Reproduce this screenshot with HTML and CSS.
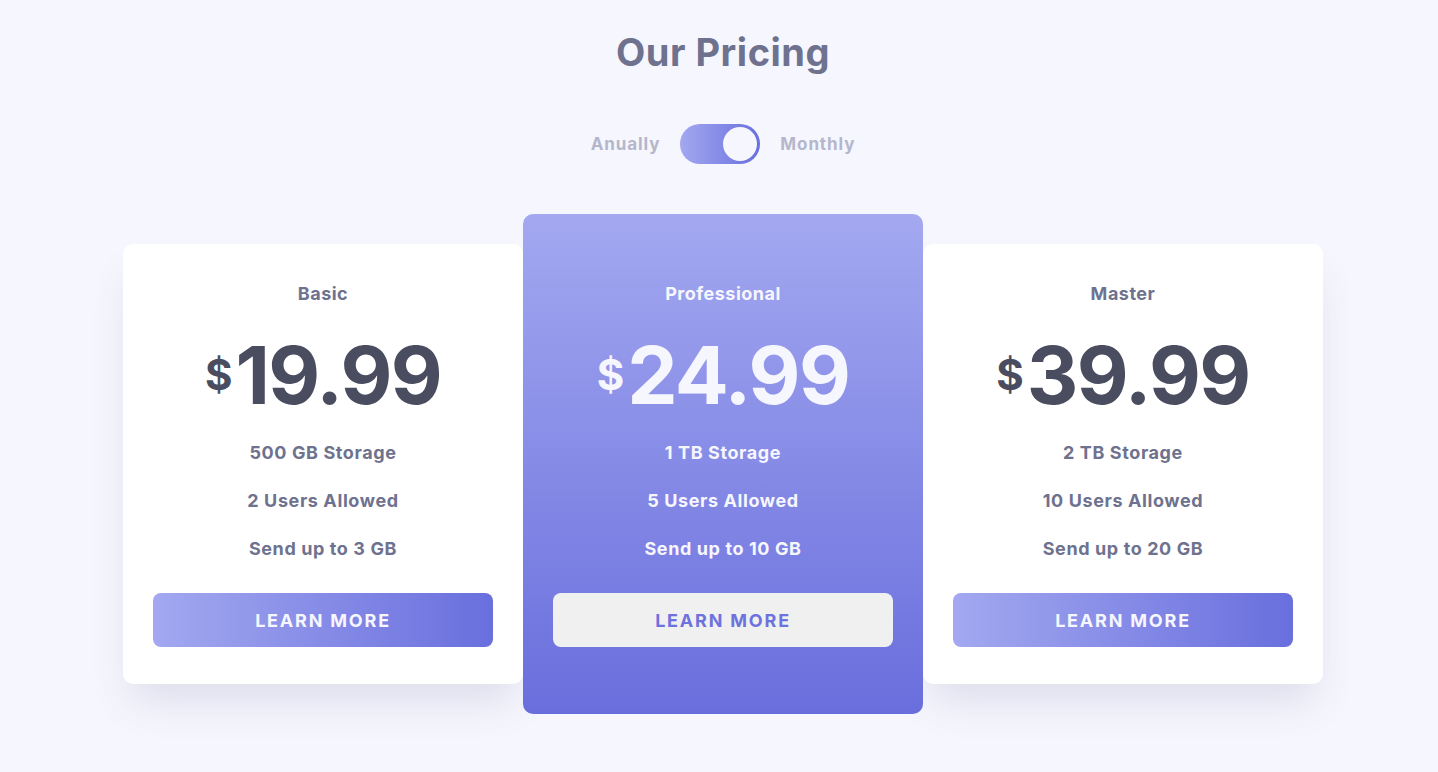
FILE: index.html
```html
<!DOCTYPE html>
<html lang="en">
<head>
<meta charset="utf-8">
<title>Our Pricing</title>
<link rel="stylesheet" href="styles.css">
</head>
<body>
<main class="page">
  <h1 class="title">Our Pricing</h1>
  <div class="switch-row">
    <span class="switch-label">Anually</span>
    <div class="switch"><span class="knob"></span></div>
    <span class="switch-label">Monthly</span>
  </div>
  <section class="cards">
    <article class="card">
      <h2 class="plan">Basic</h2>
      <div class="price"><span class="cur">$</span>19.99</div>
      <ul class="features">
        <li>500 GB Storage</li>
        <li>2 Users Allowed</li>
        <li>Send up to 3 GB</li>
      </ul>
      <button class="btn">LEARN MORE</button>
    </article>
    <article class="card featured">
      <h2 class="plan">Professional</h2>
      <div class="price"><span class="cur">$</span>24.99</div>
      <ul class="features">
        <li>1 TB Storage</li>
        <li>5 Users Allowed</li>
        <li>Send up to 10 GB</li>
      </ul>
      <button class="btn">LEARN MORE</button>
    </article>
    <article class="card">
      <h2 class="plan">Master</h2>
      <div class="price"><span class="cur">$</span>39.99</div>
      <ul class="features">
        <li>2 TB Storage</li>
        <li>10 Users Allowed</li>
        <li>Send up to 20 GB</li>
      </ul>
      <button class="btn">LEARN MORE</button>
    </article>
  </section>
</main>
</body>
</html>
```
FILE: styles.css
```css
* { box-sizing: border-box; }
html, body { margin: 0; padding: 0; }
body {
  background: #f6f6fe;
  font-family: Inter, "Open Sans", "Liberation Sans", sans-serif;
  font-weight: 700;
  color: #6e728e;
  min-height: 772px;
}
.page {
  display: flex;
  flex-direction: column;
  align-items: center;
  padding-top: 30px;
  padding-left: 8px;
}
.title {
  margin: 0;
  font-size: 38px;
  line-height: 44px;
  letter-spacing: 0.5px;
  font-weight: 700;
  color: #6e728e;
}
.switch-row {
  margin-top: 50px;
  display: flex;
  align-items: center;
  gap: 20px;
  height: 40px;
}
.switch-label {
  font-size: 17px;
  letter-spacing: 0.9px;
  color: #b4b7cc;
}
.switch {
  width: 80px;
  height: 40px;
  border-radius: 20px;
  background: linear-gradient(to right, #a3a8f0, #696fdd);
  display: flex;
  align-items: center;
  justify-content: flex-end;
  padding-right: 3px;
}
.knob {
  width: 34px;
  height: 34px;
  border-radius: 50%;
  background: #f6f6fe;
}
.cards {
  margin-top: 50px;
  display: flex;
  align-items: center;
}
.card {
  width: 400px;
  background: #fff;
  border-radius: 10px;
  padding: 39px 30px 37px;
  display: flex;
  flex-direction: column;
  align-items: center;
  text-align: center;
  box-shadow: 0 25px 40px -8px rgba(73, 78, 120, 0.14);
}
.card.featured {
  padding-top: 69px;
  padding-bottom: 67px;
  background: linear-gradient(to bottom, #a3a8f0, #696edd);
  color: #f6f6fe;
  position: relative;
  z-index: 1;
  box-shadow: none;
}
.plan {
  margin: 0;
  font-size: 18px;
  line-height: 22px;
  letter-spacing: 0.5px;
  font-weight: 700;
}
.price {
  margin-top: 25px;
  height: 90px;
  display: flex;
  align-items: center;
  justify-content: center;
  font-size: 80px;
  line-height: 90px;
  letter-spacing: -1.6px;
  color: #4a4d60;
}
.cur {
  font-size: 42px;
  margin-right: 3px;
  letter-spacing: 0;
}
.featured .price { color: #f6f6fe; }
.features {
  list-style: none;
  margin: 21px 0 0;
  padding: 0;
  display: flex;
  flex-direction: column;
  gap: 24px;
}
.features li {
  font-size: 18px;
  line-height: 24px;
  letter-spacing: 0.6px;
}
.btn {
  margin-top: 32px;
  width: 100%;
  height: 54px;
  border: 0;
  border-radius: 8px;
  background: linear-gradient(to right, #a3a8f0, #696fdd);
  color: #f6f6fe;
  font-family: inherit;
  font-weight: 700;
  font-size: 18px;
  letter-spacing: 1.8px;
  cursor: pointer;
}
.featured .btn {
  background: #f0f0f0;
  color: #6d72de;
}
```
